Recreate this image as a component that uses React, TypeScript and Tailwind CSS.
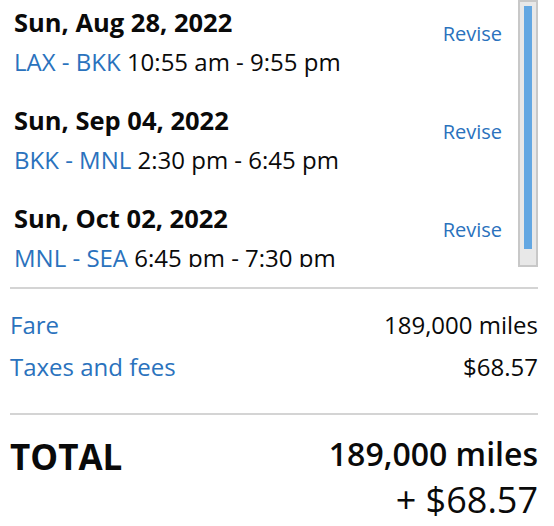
const flights = [
  { date: "Sun, Aug 28, 2022", route: "LAX - BKK", time: "10:55 am - 9:55 pm" },
  { date: "Sun, Sep 04, 2022", route: "BKK - MNL", time: "2:30 pm - 6:45 pm" },
  { date: "Sun, Oct 02, 2022", route: "MNL - SEA", time: "6:45 pm - 7:30 pm" },
]

const FlightRow = ({ date, route, time }: (typeof flights)[number]) => (
  <div className="flex h-[98px] shrink-0 items-start justify-between">
    <div className="flex flex-col">
      <div className="text-[25.5px] font-bold leading-[30px]">{date}</div>
      <div className="mt-[10px] text-[24px] leading-[30px]">
        <span className="text-[#2a72bd]">{route}</span> {time}
      </div>
    </div>
    <a className="mt-[14px] text-[20px] leading-[26px] text-[#2a72bd]">Revise</a>
  </div>
)

export default function App() {
  return (
    <div
      className="w-[554px] bg-white text-[#0a0a0a]"
      style={{ fontFamily: '"Open Sans", "Noto Sans", sans-serif' }}
    >
      <div className="flex h-[267px] w-[538px]">
        <div className="flex flex-1 flex-col overflow-hidden pl-[14px] pr-[16px] pt-[7px]">
          {flights.map((f) => (
            <FlightRow key={f.date} {...f} />
          ))}
        </div>
        <div className="flex h-full w-[20px] flex-col border-2 border-[#c8c8c8] bg-[#e8e8e8] px-[4px] pt-[4px]">
          <div className="h-[243px] w-full bg-[#63a7e2]" />
        </div>
      </div>

      <div className="ml-[10px] mr-[16px]">
        <div className="mt-[20px] h-[2px] bg-[#d4d4d4]" />
        <div className="mt-[21px] flex flex-col gap-[12px] text-[24px] leading-[30px]">
          <div className="flex justify-between">
            <span className="text-[#2a72bd]">Fare</span>
            <span>189,000 miles</span>
          </div>
          <div className="flex justify-between">
            <span className="text-[#2a72bd]">Taxes and fees</span>
            <span>$68.57</span>
          </div>
        </div>
        <div className="mt-[31px] h-[2px] bg-[#d4d4d4]" />
        <div className="flex items-start justify-between">
          <div className="mt-[22px] text-[35px] font-bold leading-[40px]">TOTAL</div>
          <div className="mt-[19px] flex flex-col items-end">
            <div className="text-[32px] font-semibold leading-[40px]">189,000 miles</div>
            <div className="mt-[4px] text-[36px] leading-[44px]">+ $68.57</div>
          </div>
        </div>
      </div>
    </div>
  )
}
